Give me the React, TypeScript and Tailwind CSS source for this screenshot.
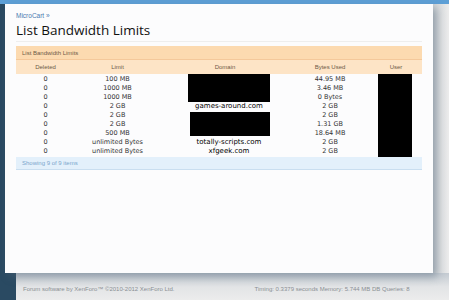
const rows = [
  { deleted: "0", limit: "100 MB", domain: "", used: "44.95 MB" },
  { deleted: "0", limit: "1000 MB", domain: "", used: "3.46 MB" },
  { deleted: "0", limit: "1000 MB", domain: "", used: "0 Bytes" },
  { deleted: "0", limit: "2 GB", domain: "games-around.com", used: "2 GB" },
  { deleted: "0", limit: "2 GB", domain: "", used: "2 GB" },
  { deleted: "0", limit: "2 GB", domain: "", used: "1.31 GB" },
  { deleted: "0", limit: "500 MB", domain: "", used: "18.64 MB" },
  { deleted: "0", limit: "unlimited Bytes", domain: "totally-scripts.com", used: "2 GB" },
  { deleted: "0", limit: "unlimited Bytes", domain: "xfgeek.com", used: "2 GB" },
];

const cols = "grid grid-cols-[59px_85px_130px_80px_52px] text-center";

export default function App() {
  return (
    <div className="flex h-[300px] w-[449px] flex-col overflow-hidden bg-[#ebebeb] font-['Liberation_Sans',sans-serif]">
      <div className="h-[4px] w-full shrink-0 bg-[#5d9fd6]" />
      <div className="flex h-[269px] shrink-0">
        <div className="w-[5px] shrink-0 bg-[#2a4a62]" />
        <div className="relative z-10 w-[428px] shrink-0 bg-[#fcfcfd] pl-[11px] pr-[11px] pt-[8px] shadow-[4px_4px_8px_rgba(80,100,120,0.45)]">
          <div className="text-[6.5px] leading-[8px] text-[#4a7ab0]">MicroCart »</div>
          <div className="mt-[1px] border-b border-[#eeeeee] pb-[2px] font-['Open_Sans',sans-serif] text-[13.5px] leading-[18px] text-[#111]">
            List Bandwidth Limits
          </div>
          <div className="mt-[4px] w-[406px]">
            <div className="h-[14px] border-b border-[#f4c89a] bg-[#fcdab0] pl-[6px] text-[6px] leading-[14px] text-[#6d5a47]">
              List Bandwidth Limits
            </div>
            <div className={`${cols} h-[14px] bg-[#fde4c6] text-[6px] leading-[14px] text-[#6d5a47]`}>
              <div>Deleted</div>
              <div>Limit</div>
              <div>Domain</div>
              <div>Bytes Used</div>
              <div>User</div>
            </div>
            <div className="relative pt-[1px] font-['DejaVu_Sans',sans-serif] text-[6.5px] text-[#333]">
              {rows.map((r, i) => (
                <div key={i} className={`${cols} h-[9px] leading-[9px]`}>
                  <div>{r.deleted}</div>
                  <div>{r.limit}</div>
                  <div className="pl-[8px] text-[7px] text-black">{r.domain}</div>
                  <div>{r.used}</div>
                  <div />
                </div>
              ))}
              <div className="absolute left-[172px] top-0 h-[28px] w-[82px] bg-black" />
              <div className="absolute left-[174px] top-[38px] h-[24px] w-[80px] bg-black" />
              <div className="absolute left-[362px] top-0 h-[83px] w-[34px] bg-black" />
            </div>
            <div className="mt-[1px] h-[13px] border-b border-[#c9def0] bg-[#e3f0fb] pl-[6px] text-[6px] leading-[13px] text-[#7ba6cc]">
              Showing 9 of 9 items
            </div>
          </div>
        </div>
        <div className="flex-1 bg-gradient-to-r from-[#cfd3d6] to-[#ececec]" />
      </div>
      <div className="flex h-[27px] shrink-0">
        <div className="w-[16px] shrink-0 bg-[#2a4a62]" />
        <div className="flex flex-1 items-center bg-gradient-to-b from-[#c3cad1] via-[#e2e4e6] to-[#ececec] pl-[7px] pt-[5px] text-[6px] text-[#8a8f94]">
          <span>Forum software by XenForo™ ©2010-2012 XenForo Ltd.</span>
          <span className="ml-[80px]">Timing: 0.3379 seconds Memory: 5.744 MB DB Queries: 8</span>
        </div>
      </div>
    </div>
  );
}
